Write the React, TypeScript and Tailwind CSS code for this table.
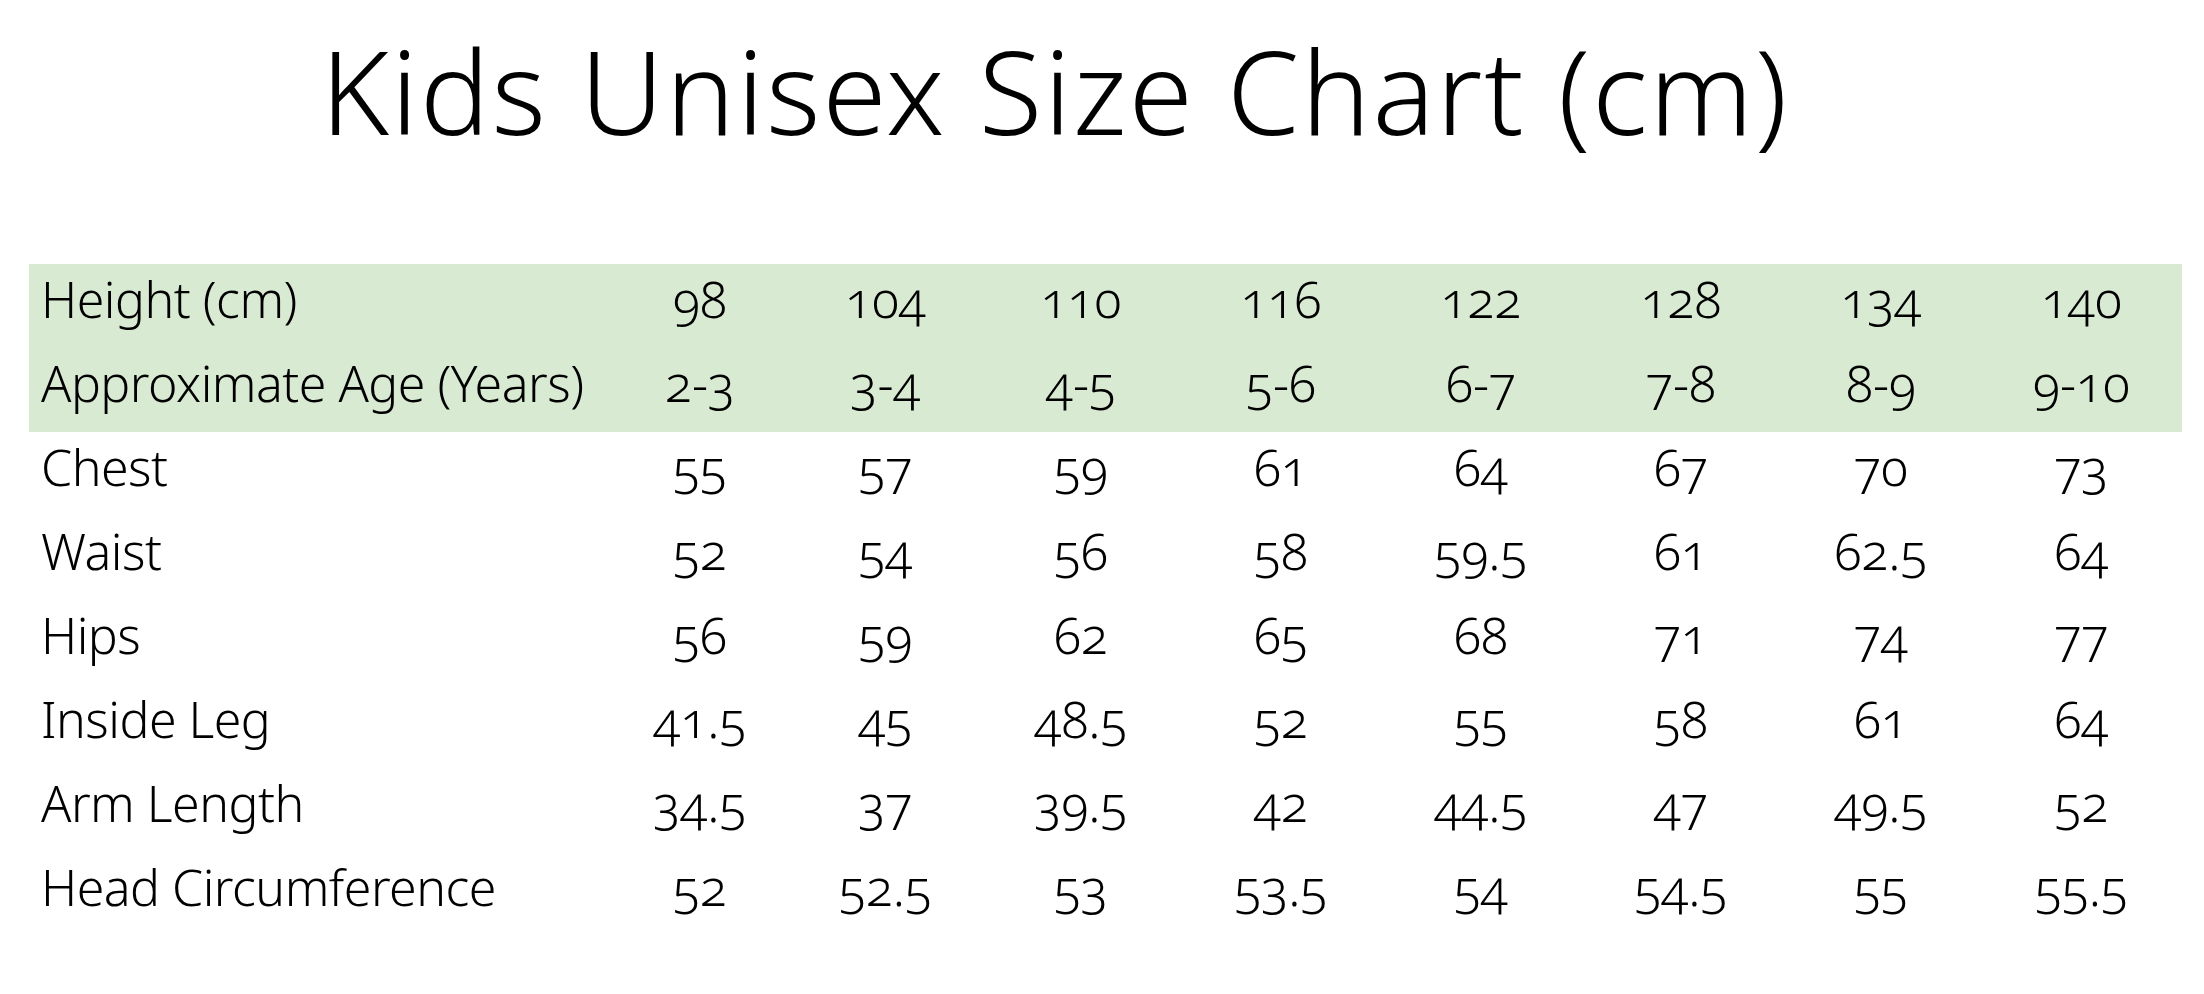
import React from "react";

const header: [string, string[]][] = [
  ["Height (cm)", ["98", "104", "110", "116", "122", "128", "134", "140"]],
  ["Approximate Age (Years)", ["2-3", "3-4", "4-5", "5-6", "6-7", "7-8", "8-9", "9-10"]],
];

const body: [string, string[]][] = [
  ["Chest", ["55", "57", "59", "61", "64", "67", "70", "73"]],
  ["Waist", ["52", "54", "56", "58", "59.5", "61", "62.5", "64"]],
  ["Hips", ["56", "59", "62", "65", "68", "71", "74", "77"]],
  ["Inside Leg", ["41.5", "45", "48.5", "52", "55", "58", "61", "64"]],
  ["Arm Length", ["34.5", "37", "39.5", "42", "44.5", "47", "49.5", "52"]],
  ["Head Circumference", ["52", "52.5", "53", "53.5", "54", "54.5", "55", "55.5"]],
];

function Row({ label, values }: { label: string; values: string[] }) {
  return (
    <div className="grid grid-cols-[581px_180px_191px_200px_200px_200px_200px_200px_201px] h-[84px]">
      <div className="pl-[12px] leading-[71px] pb-[13px] whitespace-nowrap tracking-[-0.5px]">{label}</div>
      {values.map((v, i) => (
        <div key={i} className="text-center leading-[71px] pb-[13px] whitespace-nowrap oldstyle-nums">
          {v}
        </div>
      ))}
    </div>
  );
}

export default function App() {
  return (
    <div className="w-[2204px] h-[994px] bg-white text-black font-['Noto_Sans',sans-serif] font-light">
      <div className="h-[264px] pt-[32px] pr-[94px] text-center text-[116px] leading-none whitespace-nowrap tracking-[2px]">
        Kids Unisex Size Chart (cm)
      </div>
      <div className="ml-[29px] w-[2153px] text-[50px]">
        <div className="bg-[#d9ead3]">
          {header.map(([l, v]) => (
            <Row key={l} label={l} values={v} />
          ))}
        </div>
        {body.map(([l, v]) => (
          <Row key={l} label={l} values={v} />
        ))}
      </div>
    </div>
  );
}
